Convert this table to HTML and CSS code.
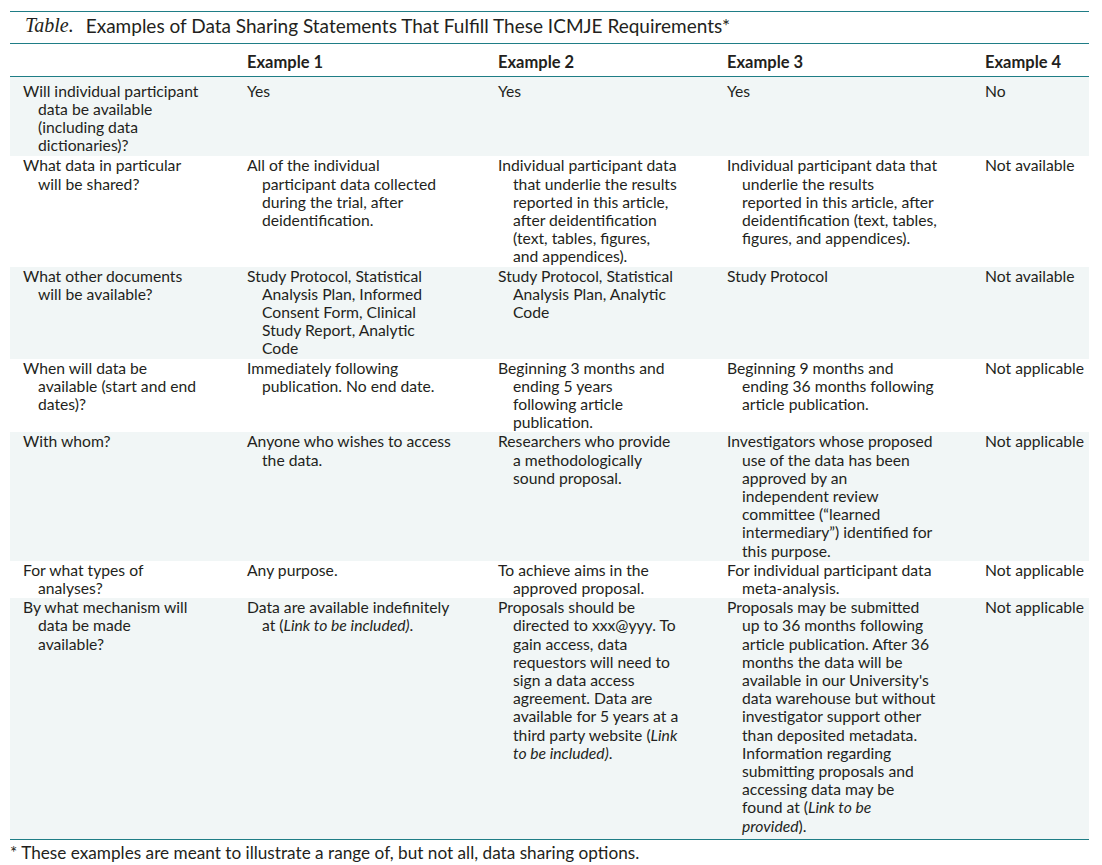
FILE: index.html
```html
<!DOCTYPE html>
<html lang="en">
<head>
<meta charset="utf-8">
<title>Examples of Data Sharing Statements</title>
<link rel="stylesheet" href="styles.css">
</head>
<body>
<div class="figure">
  <div class="title"><span class="label">Table.</span><span class="title-text">Examples of Data Sharing Statements That Fulfill These ICMJE Requirements*</span></div>
  <table class="data">
    <colgroup>
      <col class="c-q"><col class="c-e1"><col class="c-e2"><col class="c-e3"><col class="c-e4">
    </colgroup>
    <thead>
      <tr>
        <th></th><th>Example 1</th><th>Example 2</th><th>Example 3</th><th>Example 4</th>
      </tr>
    </thead>
    <tbody>
      <tr class="tint first">
        <td>Will individual participant<br>data be available<br>(including data<br>dictionaries)?</td>
        <td>Yes</td><td>Yes</td><td>Yes</td><td>No</td>
      </tr>
      <tr>
        <td>What data in particular<br>will be shared?</td>
        <td>All of the individual<br>participant data collected<br>during the trial, after<br>deidentification.</td>
        <td>Individual participant data<br>that underlie the results<br>reported in this article,<br>after deidentification<br>(text, tables, figures,<br>and appendices).</td>
        <td>Individual participant data that<br>underlie the results<br>reported in this article, after<br>deidentification (text, tables,<br>figures, and appendices).</td>
        <td>Not available</td>
      </tr>
      <tr class="tint">
        <td>What other documents<br>will be available?</td>
        <td>Study Protocol, Statistical<br>Analysis Plan, Informed<br>Consent Form, Clinical<br>Study Report, Analytic<br>Code</td>
        <td>Study Protocol, Statistical<br>Analysis Plan, Analytic<br>Code</td>
        <td>Study Protocol</td>
        <td>Not available</td>
      </tr>
      <tr>
        <td>When will data be<br>available (start and end<br>dates)?</td>
        <td>Immediately following<br>publication. No end date.</td>
        <td>Beginning 3 months and<br>ending 5 years<br>following article<br>publication.</td>
        <td>Beginning 9 months and<br>ending 36 months following<br>article publication.</td>
        <td>Not applicable</td>
      </tr>
      <tr class="tint">
        <td>With whom?</td>
        <td>Anyone who wishes to access<br>the data.</td>
        <td>Researchers who provide<br>a methodologically<br>sound proposal.</td>
        <td>Investigators whose proposed<br>use of the data has been<br>approved by an<br>independent review<br>committee (“learned<br>intermediary”) identified for<br>this purpose.</td>
        <td>Not applicable</td>
      </tr>
      <tr>
        <td>For what types of<br>analyses?</td>
        <td>Any purpose.</td>
        <td>To achieve aims in the<br>approved proposal.</td>
        <td>For individual participant data<br>meta-analysis.</td>
        <td>Not applicable</td>
      </tr>
      <tr class="tint last">
        <td>By what mechanism will<br>data be made<br>available?</td>
        <td>Data are available indefinitely<br>at (<i>Link to be included)</i>.</td>
        <td>Proposals should be<br>directed to xxx@yyy. To<br>gain access, data<br>requestors will need to<br>sign a data access<br>agreement. Data are<br>available for 5 years at a<br>third party website (<i>Link</i><br><i>to be included)</i>.</td>
        <td>Proposals may be submitted<br>up to 36 months following<br>article publication. After 36<br>months the data will be<br>available in our University's<br>data warehouse but without<br>investigator support other<br>than deposited metadata.<br>Information regarding<br>submitting proposals and<br>accessing data may be<br>found at (<i>Link to be</i><br><i>provided</i>).</td>
        <td>Not applicable</td>
      </tr>
    </tbody>
  </table>
  <p class="footnote">* These examples are meant to illustrate a range of, but not all, data sharing options.</p>
</div>
</body>
</html>
```
FILE: styles.css
```css
html, body {
  margin: 0;
  padding: 0;
  background: #ffffff;
}

body {
  font-family: Lato, "Open Sans", "Liberation Sans", sans-serif;
  color: #231f20;
}

.figure {
  width: 1079px;
  margin: 11px 0 0 10px;
}

.title {
  border-top: 1px solid #1f7d86;
  border-bottom: 1px solid #1f7d86;
  box-sizing: border-box;
  height: 33px;
  display: flex;
  align-items: center;
  padding: 0 0 4px 15px;
  white-space: nowrap;
}

.label {
  font-family: "Liberation Serif", "DejaVu Serif", serif;
  font-style: italic;
  font-size: 20px;
  margin-right: 12px;
}

.title-text {
  font-size: 19px;
}

.data {
  width: 1079px;
  table-layout: fixed;
  border-collapse: collapse;
  font-size: 15.7px;
  line-height: 18.2px;
}

.c-q { width: 224px; }
.c-e1 { width: 251px; }
.c-e2 { width: 229px; }
.c-e3 { width: 258px; }
.c-e4 { width: 117px; }

.data th {
  height: 32px;
  box-sizing: border-box;
  padding: 5px 0 0 13px;
  text-align: left;
  font-size: 16.5px;
  font-weight: 700;
  vertical-align: middle;
  border-bottom: 1px solid #1f7d86;
}

.data td {
  vertical-align: top;
  padding: 0 2px 1px 28px;
  text-indent: -15px;
  white-space: nowrap;
}

.data tr.tint td {
  background: #f1f6f6;
}

.data tr.first td {
  padding-top: 5px;
  padding-bottom: 2px;
}

.data tr.last td {
  padding-bottom: 4px;
  border-bottom: 1px solid #1f7d86;
}

.footnote {
  margin: 4px 0 0 0;
  font-size: 17.2px;
  line-height: 18px;
}
```
